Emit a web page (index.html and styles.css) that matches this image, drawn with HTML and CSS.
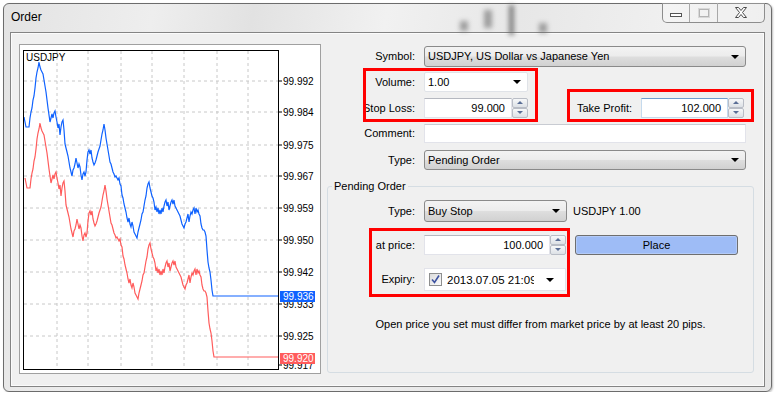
FILE: index.html
```html
<!DOCTYPE html>
<html lang="en">
<head>
    <meta charset="UTF-8">
    <title>Order</title>
    <link rel="stylesheet" href="styles.css">
</head>
<body>
    <div class="window">
        <div class="glass g1"></div>
        <div class="glass g2"></div>
        <div class="glass g3"></div>
        <div class="glass g4"></div>

        <div class="titlebar">
            <span class="title">Order</span>
        </div>

        <div class="caption">
            <span class="cb min"><i></i></span>
            <span class="cb max"><i></i></span>
            <span class="cb close">
                <svg width="14" height="11" viewBox="0 0 14 11">
                    <path d="M1.5 0.5h3l2.5 3l2.5-3h3l-4 5l4 5h-3l-2.5-3l-2.5 3h-3l4-5z" fill="#fff" stroke="#4a4a4a" stroke-width="1" stroke-linejoin="round"/>
                </svg>
            </span>
        </div>

        <div class="client">
            <div class="chart">
                <svg width="300" height="328" viewBox="20 45 300 328">
                    <defs>
                        <clipPath id="plot"><rect x="24" y="51" width="254" height="318"/></clipPath>
                        <polyline id="ask" fill="none" points="24,117 25,122 26,127 29,127 30,118 31,112 32,108 33,100 34,96 35,88 36,78 37,72 38,68 39,62 40,67 41,70 42,72 43,74 44,80 45,86 46,92 47,100 48,108 49,115 50,122 51,118 52,114 53,118 54,113 55,111 56,117 57,122 58,128 59,124 60,135 61,127 62,122 63,120 64,130 65,144 66,148 67,152 68,156 69,162 70,168 71,172 72,176 73,170 74,168 75,164 76,158 77,163 78,168 79,164 80,167 81,175 82,180 83,174 84,172 85,176 86,172 87,160 88,152 89,150 90,154 91,150 92,158 93,162 94,165 95,163 96,160 97,156 98,152 99,149 100,146 101,140 102,134 103,130 104,124 105,130 106,138 107,144 108,150 109,156 110,162 111,164 112,168 113,172 114,174 115,177 116,176 117,178 118,180 119,178 120,184 121,186 122,195 123,198 124,204 125,208 126,212 127,218 128,222 129,218 130,224 131,227 132,222 133,226 134,232 135,234 136,236 137,238 138,232 139,228 140,224 141,220 142,214 143,212 144,206 145,200 146,196 147,188 148,184 149,182 150,188 151,192 152,196 153,198 154,202 155,210 156,207 157,212 158,208 159,214 160,210 161,214 162,208 163,212 164,206 165,202 166,200 167,206 168,202 169,210 170,206 171,202 172,200 173,204 174,200 175,206 176,208 177,210 178,212 179,214 180,216 181,220 182,224 183,226 184,228 185,224 186,222 187,218 188,214 189,222 190,216 191,212 192,214 193,210 194,208 195,214 196,208 197,212 198,210 199,214 200,216 201,224 202,228 203,230 204,230 205,232 206,236 207,250 208,262 209,268 210,272 211,280 212,290 213,296 280,296"/>
                    </defs>

                    <g class="grid">
                        <line x1="24" y1="81" x2="278" y2="81"/>
                        <line x1="24" y1="112" x2="278" y2="112"/>
                        <line x1="24" y1="145" x2="278" y2="145"/>
                        <line x1="24" y1="176" x2="278" y2="176"/>
                        <line x1="24" y1="208" x2="278" y2="208"/>
                        <line x1="24" y1="240" x2="278" y2="240"/>
                        <line x1="24" y1="272" x2="278" y2="272"/>
                        <line x1="24" y1="304" x2="278" y2="304"/>
                        <line x1="24" y1="336" x2="278" y2="336"/>
                        <line x1="57" y1="51" x2="57" y2="369"/>
                        <line x1="88" y1="51" x2="88" y2="369"/>
                        <line x1="121" y1="51" x2="121" y2="369"/>
                        <line x1="152" y1="51" x2="152" y2="369"/>
                        <line x1="184" y1="51" x2="184" y2="369"/>
                        <line x1="217" y1="51" x2="217" y2="369"/>
                        <line x1="248" y1="51" x2="248" y2="369"/>
                    </g>

                    <g clip-path="url(#plot)">
                        <use href="#ask" stroke="#ff5c5c" stroke-width="1.2" transform="translate(1,61)"/>
                        <use href="#ask" stroke="#0f62ff" stroke-width="1.2"/>
                    </g>

                    <rect x="23.5" y="50.5" width="255" height="319" fill="none" stroke="#000"/>

                    <g class="ticks">
                        <line x1="278" y1="81" x2="282" y2="81"/>
                        <line x1="278" y1="112" x2="282" y2="112"/>
                        <line x1="278" y1="145" x2="282" y2="145"/>
                        <line x1="278" y1="176" x2="282" y2="176"/>
                        <line x1="278" y1="208" x2="282" y2="208"/>
                        <line x1="278" y1="240" x2="282" y2="240"/>
                        <line x1="278" y1="272" x2="282" y2="272"/>
                        <line x1="278" y1="304" x2="282" y2="304"/>
                        <line x1="278" y1="336" x2="282" y2="336"/>
                        <line x1="278" y1="365" x2="282" y2="365"/>
                    </g>

                    <g class="axis">
                        <text x="283" y="85">99.992</text>
                        <text x="283" y="116">99.984</text>
                        <text x="283" y="149">99.975</text>
                        <text x="283" y="180">99.967</text>
                        <text x="283" y="212">99.959</text>
                        <text x="283" y="244">99.950</text>
                        <text x="283" y="276">99.942</text>
                        <text x="283" y="308">99.933</text>
                        <text x="283" y="340">99.925</text>
                        <text x="283" y="369">99.917</text>
                    </g>

                    <rect x="280" y="291" width="35" height="11" fill="#0f62ff"/>
                    <text class="tag" x="283" y="300">99.936</text>
                    <rect x="280" y="353" width="35" height="11" fill="#ff5c5c"/>
                    <text class="tag" x="283" y="362">99.920</text>

                    <text class="sym" x="26" y="61">USDJPY</text>
                </svg>
            </div>

            <div class="form">
                <div class="row">
                    <span class="lbl h21">Symbol:</span>
                    <div class="select w-full h21">USDJPY, US Dollar vs Japanese Yen<span class="arrow"></span></div>
                </div>
                <div class="row">
                    <span class="lbl">Volume:</span>
                    <div class="combo">1.00<span class="arrow"></span></div>
                </div>
                <div class="row">
                    <span class="lbl">Stop Loss:</span>
                    <div class="num">
                        <div class="num-val w88">99.000</div>
                        <div class="spin"><span class="up"></span><span class="down"></span></div>
                    </div>
                    <span class="lbl tp">Take Profit:</span>
                    <div class="num">
                        <div class="num-val w87 focus">102.000</div>
                        <div class="spin"><span class="up"></span><span class="down"></span></div>
                    </div>
                </div>
                <div class="row">
                    <span class="lbl h19">Comment:</span>
                    <div class="text w-full"></div>
                </div>
                <div class="row">
                    <span class="lbl">Type:</span>
                    <div class="select w-full">Pending Order<span class="arrow"></span></div>
                </div>

                <div class="group">
                    <span class="group-title">Pending Order</span>
                    <div class="grow">
                        <span class="lbl g h22">Type:</span>
                        <div class="select w143 h22">Buy Stop<span class="arrow"></span></div>
                        <span class="info">USDJPY 1.00</span>
                    </div>
                    <div class="grow">
                        <span class="lbl g">at price:</span>
                        <div class="num">
                            <div class="num-val w126">100.000</div>
                            <div class="spin"><span class="up"></span><span class="down"></span></div>
                        </div>
                        <button class="place">Place</button>
                    </div>
                    <div class="grow">
                        <span class="lbl g h23">Expiry:</span>
                        <div class="date">
                            <span class="check">
                                <svg width="9" height="9" viewBox="0 0 9 9"><path d="M1 4.5l2.5 3l4.5-7" fill="none" stroke="#3d52a0" stroke-width="1.6"/></svg>
                            </span>
                            <span class="date-val">2013.07.05 21:09</span>
                            <span class="arrow"></span>
                        </div>
                    </div>
                    <p class="note">Open price you set must differ from market price by at least 20 pips.</p>
                </div>

                <div class="mark m1"></div>
                <div class="mark m2"></div>
                <div class="mark m3"></div>
            </div>
        </div>
    </div>
</body>
</html>
```

FILE: styles.css
```css
body {
    margin: 0;
    background: #fff;
    font-family: "Liberation Sans", Arial, sans-serif;
    font-size: 11px;
    color: #000;
}
.window {
    position: relative;
    box-sizing: border-box;
    width: 769px;
    height: 389px;
    margin: 3px 0 0 3px;
    padding: 0 6px;
    border: 1px solid #6c6c6c;
    border-radius: 6px;
    background: linear-gradient(100deg, #e3e3e3 0%, #eeeeee 18%, #e2e2e2 30%, #f1f1f1 46%, #e7e7e7 62%, #f0f0f0 80%, #e6e6e6 100%);
    box-shadow: 1px 1px 2px rgba(0,0,0,0.25);
}
.glass {
    position: absolute;
    background: #6a6a6a;
    filter: blur(2.5px);
    opacity: 0.6;
}
.g1 { left: 456px; top: 17px; width: 8px; height: 10px; }
.g2 { left: 480px; top: 6px; width: 8px; height: 18px; }
.g3 { left: 505px; top: 1px; width: 5px; height: 30px; opacity: 0.85; }
.g4 { left: 535px; top: 19px; width: 8px; height: 10px; }
.titlebar {
    height: 28px;
    padding-left: 1px;
    line-height: 26px;
}
.title {
    font-size: 12px;
}
.caption {
    position: absolute;
    top: -1px;
    right: 6px;
    display: flex;
    height: 19px;
    border: 1px solid #8d8d8d;
    border-top: none;
    border-radius: 0 0 5px 5px;
    background: rgba(255,255,255,0.25);
}
.cb {
    display: flex;
    align-items: center;
    justify-content: center;
    height: 19px;
}
.min {
    width: 26px;
    border-right: 1px solid #a8a8a8;
}
.min i {
    width: 10px;
    height: 2px;
    margin-top: 5px;
    border: 1px solid #555;
    background: #fff;
}
.max {
    width: 27px;
    border-right: 1px solid #a8a8a8;
}
.max i {
    width: 8px;
    height: 6px;
    border: 1px solid #b4b4b4;
    outline: 1px solid #d8d8d8;
}
.close {
    width: 46px;
}
.client {
    box-sizing: border-box;
    display: flex;
    align-items: flex-start;
    height: 355px;
    border: 1px solid #848484;
    background: #f0f0f0;
    box-shadow: inset 0 0 0 1px #fbfbfb;
}
.chart {
    margin: 11px 0 0 8px;
    border: 1px solid #a0a0a0;
    background: #fff;
    line-height: 0;
}
.grid line {
    stroke: #c8c8c8;
    stroke-dasharray: 3 3;
}
.ticks line {
    stroke: #000;
}
.axis text, .tag, .sym {
    font-family: "Liberation Sans", Arial, sans-serif;
    font-size: 10px;
}
.tag {
    fill: #fff;
}
.form {
    position: relative;
    width: 427px;
    margin-left: 6px;
    padding-top: 13px;
}
.row {
    display: flex;
    align-items: flex-start;
    height: 26px;
}
.lbl {
    width: 88px;
    margin-right: 9px;
    text-align: right;
    line-height: 20px;
}
.lbl.g {
    width: 87px;
}
.lbl.tp {
    width: 104px;
}
.h19 { line-height: 19px; }
.h21 { line-height: 21px; }
.h22 { line-height: 22px; }
.h23 { line-height: 23px; }
.select {
    position: relative;
    box-sizing: border-box;
    height: 20px;
    padding-left: 3px;
    line-height: 18px;
    border: 1px solid #8a8a8a;
    border-radius: 3px;
    background: linear-gradient(#f3f3f3 0%, #ececec 48%, #dedede 52%, #d1d1d1 100%);
}
.select.h21 { height: 21px; line-height: 19px; }
.select.h22 { height: 22px; line-height: 20px; }
.w-full { width: 322px; }
.w143 { width: 143px; }
.arrow {
    position: absolute;
    right: 6px;
    top: 50%;
    margin-top: -2px;
    border-left: 4px solid transparent;
    border-right: 4px solid transparent;
    border-top: 4px solid #000;
}
.combo {
    position: relative;
    box-sizing: border-box;
    width: 104px;
    height: 20px;
    padding-left: 3px;
    line-height: 18px;
    border: 1px solid #e0e3e8;
    border-radius: 2px;
    background: #fff;
}
.num {
    display: flex;
}
.num-val {
    box-sizing: border-box;
    height: 20px;
    padding-right: 6px;
    text-align: right;
    line-height: 18px;
    background: #fff;
    border: 1px solid #e2e3ea;
    border-top-color: #b5b8c0;
}
.num-val.focus {
    border-color: #c5daed;
    border-top-color: #6d9ccf;
}
.w88 { width: 88px; }
.w87 { width: 87px; }
.w126 { width: 126px; }
.spin {
    display: flex;
    flex-direction: column;
    width: 16px;
    height: 20px;
}
.spin span {
    position: relative;
    flex: 1;
    border: 1px solid #b9bdc6;
    border-radius: 2px;
    background: linear-gradient(#f7f8f9, #dde1e6);
}
.spin span::after {
    content: "";
    position: absolute;
    left: 4px;
    top: 2px;
    border-left: 3px solid transparent;
    border-right: 3px solid transparent;
}
.spin .up::after {
    border-bottom: 3px solid #5a6e96;
}
.spin .down::after {
    border-top: 3px solid #5a6e96;
}
.text {
    box-sizing: border-box;
    height: 19px;
    background: #fff;
    border: 1px solid #e2e3ea;
    border-top-color: #c8cbd2;
}
.group {
    position: relative;
    box-sizing: border-box;
    height: 187px;
    margin-top: 10px;
    padding-top: 13px;
    border: 1px solid #d5dde3;
    border-radius: 3px;
}
.group-title {
    position: absolute;
    left: 4px;
    top: -8px;
    padding: 0 2px;
    line-height: 14px;
    background: #f0f0f0;
}
.grow {
    display: flex;
    align-items: flex-start;
    margin-bottom: 13px;
}
.info {
    margin-left: 6px;
    line-height: 22px;
}
.place {
    box-sizing: border-box;
    width: 163px;
    height: 20px;
    margin-left: 9px;
    padding: 0;
    font: inherit;
    border: 1px solid #6f6f6f;
    border-radius: 3px;
    background: #9ebcf6;
    box-shadow: inset 0 0 0 1px #b4cbf8;
}
.date {
    position: relative;
    box-sizing: border-box;
    display: flex;
    align-items: center;
    width: 142px;
    height: 23px;
    padding-left: 4px;
    background: #fff;
    border: 1px solid #e2e3ea;
}
.check {
    display: flex;
    align-items: center;
    justify-content: center;
    box-sizing: border-box;
    width: 13px;
    height: 13px;
    border: 1px solid #8e8f8f;
    background: linear-gradient(135deg, #dcdcdc, #fbfbfb);
}
.date-val {
    width: 87px;
    margin-left: 5px;
    overflow: hidden;
    white-space: nowrap;
    font-size: 11.5px;
}
.date .arrow {
    right: 11px;
}
.note {
    margin: 26px 0 0;
    text-align: center;
    line-height: 14px;
}
.mark {
    position: absolute;
    box-sizing: border-box;
    border: 3px solid #f00;
}
.m1 { left: 36px; top: 35px; width: 175px; height: 54px; }
.m2 { left: 240px; top: 56px; width: 187px; height: 33px; }
.m3 { left: 42px; top: 195px; width: 201px; height: 69px; }
```
